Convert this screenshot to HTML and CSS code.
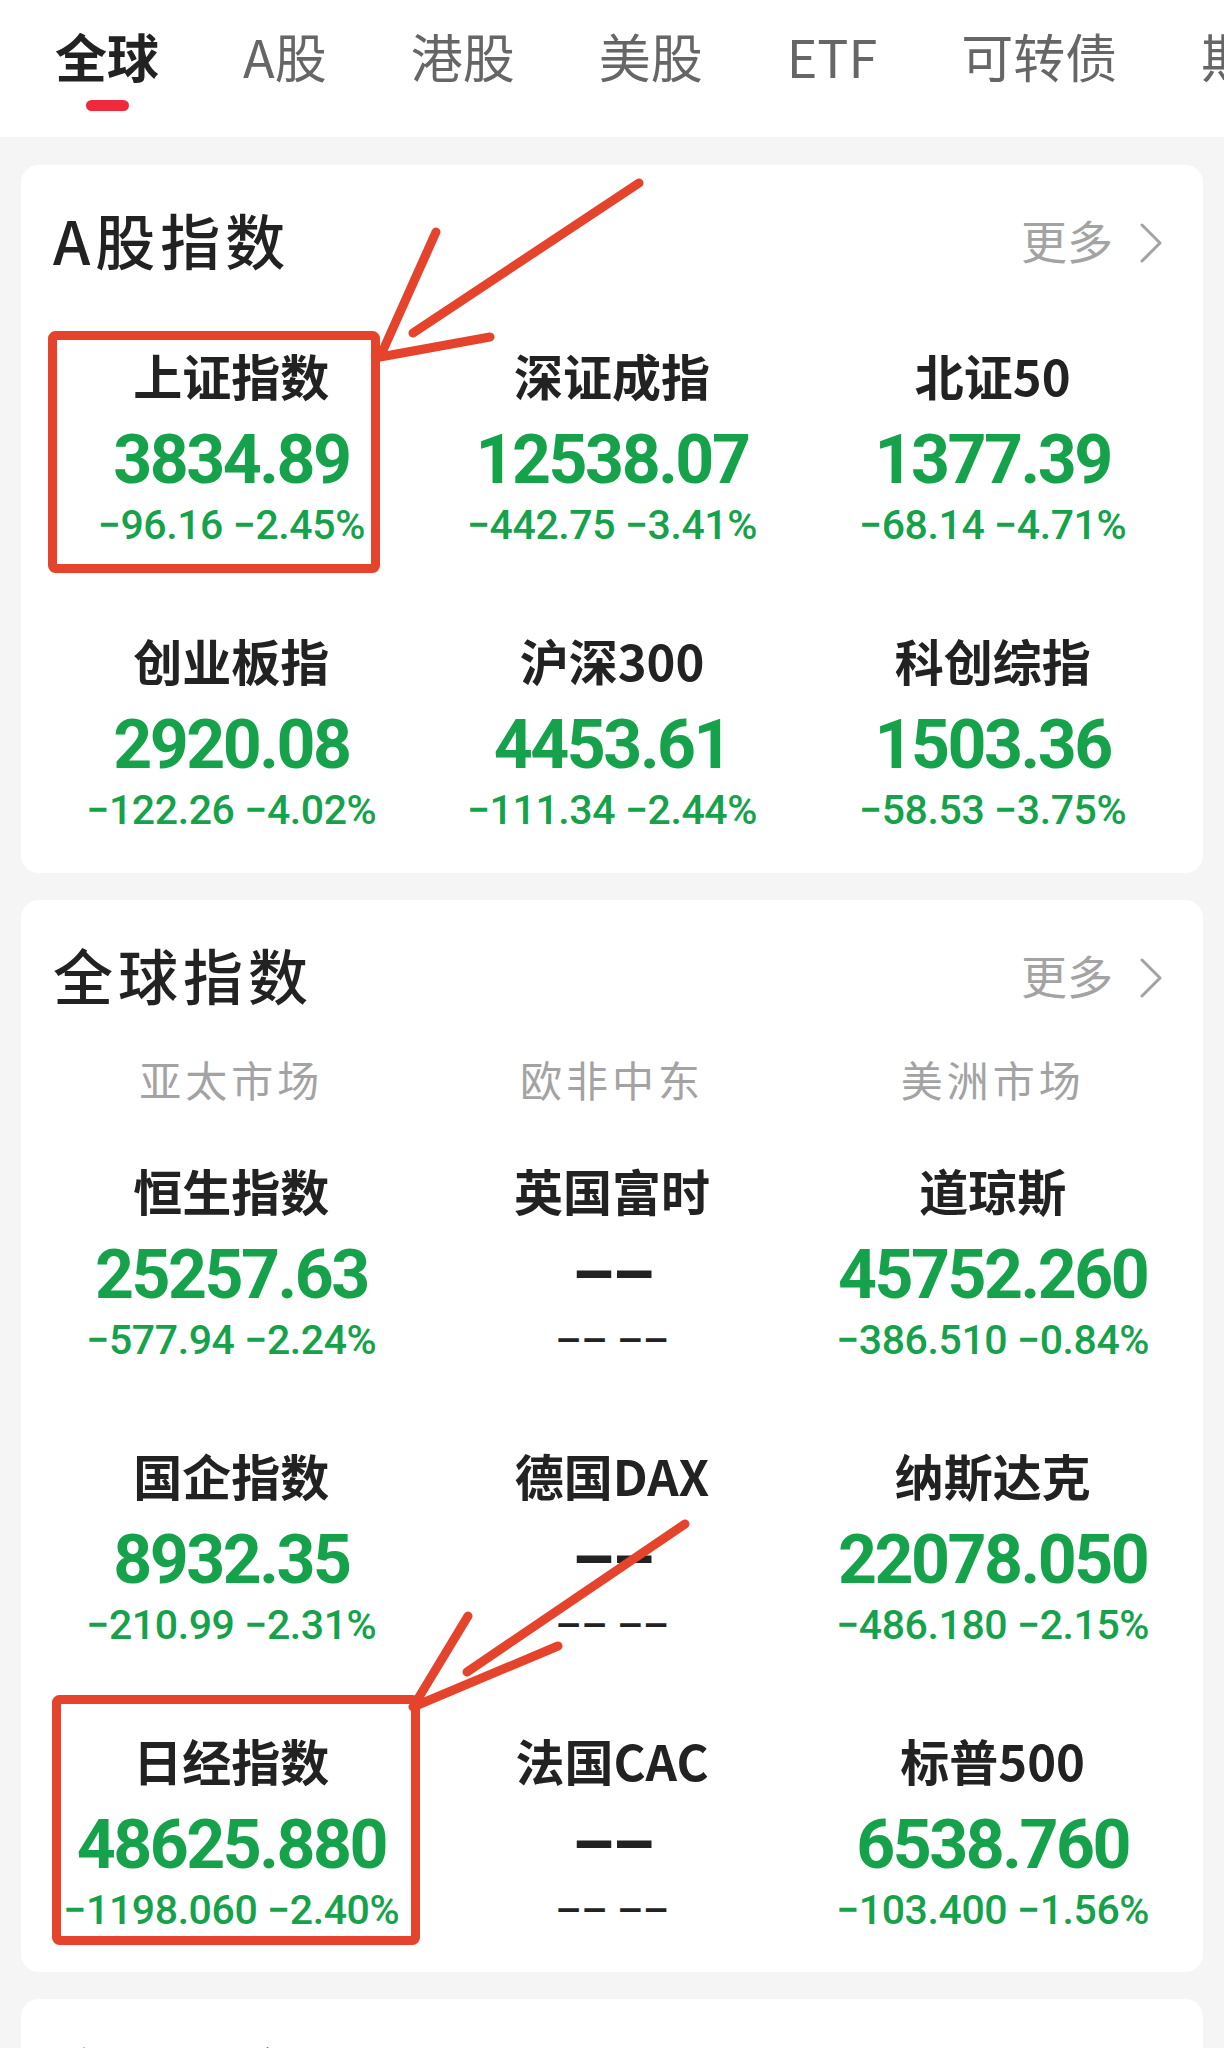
FILE: index.html
```html
<!DOCTYPE html>
<html lang="zh-CN">
<head>
    <meta charset="UTF-8">
    <meta name="viewport" content="width=device-width, initial-scale=1.0">
    <title>全球指数</title>
    <link rel="stylesheet" href="styles.css">
</head>
<body>
<div class="page">

    <!-- Market tabs -->
    <nav class="tabs">
        <div class="tab active">全球<span class="tab-line"></span></div>
        <div class="tab">A股</div>
        <div class="tab">港股</div>
        <div class="tab">美股</div>
        <div class="tab">ETF</div>
        <div class="tab">可转债</div>
        <div class="tab">期货</div>
    </nav>

    <!-- A-share indexes -->
    <section class="card">
        <div class="card-head">
            <h2 class="card-title">A股指数</h2>
            <a class="more">更多<svg class="chevron" width="24" height="40" viewBox="0 0 24 40"><polyline points="3,2 21,20 3,38" fill="none" stroke="#a3a3a3" stroke-width="3" stroke-linecap="round" stroke-linejoin="round"/></svg></a>
        </div>
        <div class="quote-grid">
            <div class="quote"><div class="q-name">上证指数</div><div class="q-price">3834.89</div><div class="q-change">−96.16 −2.45%</div></div>
            <div class="quote"><div class="q-name">深证成指</div><div class="q-price">12538.07</div><div class="q-change">−442.75 −3.41%</div></div>
            <div class="quote"><div class="q-name">北证50</div><div class="q-price">1377.39</div><div class="q-change">−68.14 −4.71%</div></div>
            <div class="quote"><div class="q-name">创业板指</div><div class="q-price">2920.08</div><div class="q-change">−122.26 −4.02%</div></div>
            <div class="quote"><div class="q-name">沪深300</div><div class="q-price">4453.61</div><div class="q-change">−111.34 −2.44%</div></div>
            <div class="quote"><div class="q-name">科创综指</div><div class="q-price">1503.36</div><div class="q-change">−58.53 −3.75%</div></div>
        </div>
    </section>

    <!-- Global indexes -->
    <section class="card">
        <div class="card-head">
            <h2 class="card-title">全球指数</h2>
            <a class="more">更多<svg class="chevron" width="24" height="40" viewBox="0 0 24 40"><polyline points="3,2 21,20 3,38" fill="none" stroke="#a3a3a3" stroke-width="3" stroke-linecap="round" stroke-linejoin="round"/></svg></a>
        </div>
        <div class="regions">
            <span>亚太市场</span>
            <span>欧非中东</span>
            <span>美洲市场</span>
        </div>
        <div class="quote-grid global">
            <div class="quote"><div class="q-name">恒生指数</div><div class="q-price">25257.63</div><div class="q-change">−577.94 −2.24%</div></div>
            <div class="quote"><div class="q-name">英国富时</div><div class="q-price empty">––</div><div class="q-change empty">–– ––</div></div>
            <div class="quote"><div class="q-name">道琼斯</div><div class="q-price">45752.260</div><div class="q-change">−386.510 −0.84%</div></div>
            <div class="quote"><div class="q-name">国企指数</div><div class="q-price">8932.35</div><div class="q-change">−210.99 −2.31%</div></div>
            <div class="quote"><div class="q-name">德国DAX</div><div class="q-price empty">––</div><div class="q-change empty">–– ––</div></div>
            <div class="quote"><div class="q-name">纳斯达克</div><div class="q-price">22078.050</div><div class="q-change">−486.180 −2.15%</div></div>
            <div class="quote"><div class="q-name">日经指数</div><div class="q-price">48625.880</div><div class="q-change">−1198.060 −2.40%</div></div>
            <div class="quote"><div class="q-name">法国CAC</div><div class="q-price empty">––</div><div class="q-change empty">–– ––</div></div>
            <div class="quote"><div class="q-name">标普500</div><div class="q-price">6538.760</div><div class="q-change">−103.400 −1.56%</div></div>
        </div>
    </section>

    <!-- Next card, cut off by the screen edge -->
    <section class="card card-next">
        <div class="card-head">
            <h2 class="card-title">商品期货</h2>
        </div>
    </section>

    <!-- Hand-drawn red annotations over the screenshot -->
    <svg class="marks" width="1224" height="2048" viewBox="0 0 1224 2048">
        <g fill="none" stroke="#e5432b" stroke-width="9" stroke-linecap="round" stroke-linejoin="round">
            <rect x="52.5" y="335.5" width="323" height="233" rx="3"/>
            <line x1="639" y1="183" x2="413" y2="333"/>
            <polyline points="436,232 380,357 490,337"/>

            <rect x="56.5" y="1699.5" width="359" height="241" rx="3"/>
            <line x1="685" y1="1524" x2="467" y2="1672"/>
            <polyline points="468,1616 413,1707 558,1646"/>
        </g>
    </svg>
</div>
</body>
</html>
```

FILE: styles.css
```css
/* Page base */
body {
    margin: 0;
    background-color: #f5f5f5;
    font-family: "Noto Sans CJK SC", "Noto Sans", sans-serif;
    color: #222;
}

.page {
    position: relative;
    width: 1224px;
    height: 2048px;
    overflow: hidden;
}

/* Top market tabs */
.tabs {
    display: flex;
    gap: 84px;
    height: 137px;
    box-sizing: border-box;
    padding: 26px 0 0 55px;
    background-color: #fff;
    white-space: nowrap;
    overflow: hidden;
}

.tab {
    display: flex;
    flex-direction: column;
    align-items: center;
    flex-shrink: 0;
    font-size: 52px;
    line-height: 60px;
    color: #666;
}

.tab.active {
    font-weight: 700;
    color: #222;
}

.tab-line {
    width: 43px;
    height: 11px;
    margin-top: 14px;
    border-radius: 6px;
    background-color: #ee2a3c;
}

/* Cards */
.card {
    margin: 0 21px 27px;
    background-color: #fff;
    border-radius: 18px;
}

.tabs + .card {
    margin-top: 28px;
}

.card-head {
    display: flex;
    align-items: center;
    justify-content: space-between;
    height: 154px;
    box-sizing: border-box;
    padding: 0 40px 7px 32px;
}

.card-title {
    margin: 0;
    font-size: 60px;
    line-height: 70px;
    font-weight: 500;
    letter-spacing: 5px;
    color: #222;
}

.more {
    display: flex;
    align-items: center;
    gap: 26px;
    font-size: 46px;
    line-height: 60px;
    color: #a3a3a3;
}

.chevron {
    margin-top: 8px;
}

/* Region labels of the global card */
.regions {
    display: grid;
    grid-template-columns: repeat(3, 1fr);
    padding: 0 20px;
    font-size: 42px;
    line-height: 50px;
    letter-spacing: 4px;
    color: #a3a3a3;
    text-align: center;
}

/* Quote grid */
.quote-grid {
    display: grid;
    grid-template-columns: repeat(3, 1fr);
    row-gap: 80px;
    padding: 26px 20px 38px;
}

.quote-grid.global {
    padding: 56px 20px 37px;
}

.quote {
    text-align: center;
    white-space: nowrap;
}

.q-name {
    font-size: 49px;
    line-height: 60px;
    font-weight: 700;
    color: #222;
}

.q-price {
    margin-top: 15px;
    font-family: Roboto, "Liberation Sans", sans-serif;
    font-size: 68px;
    line-height: 80px;
    font-weight: 700;
    letter-spacing: -2.5px;
    color: #15a24b;
}

.q-change {
    font-family: Roboto, "Liberation Sans", sans-serif;
    font-size: 41px;
    line-height: 50px;
    font-weight: 500;
    letter-spacing: -0.4px;
    color: #15a24b;
}

/* Markets without data show dashes */
.q-price.empty,
.q-change.empty {
    color: #222;
}

.card-next {
    height: 200px;
}

/* Annotation overlay */
.marks {
    position: absolute;
    top: 0;
    left: 0;
    pointer-events: none;
}
```
